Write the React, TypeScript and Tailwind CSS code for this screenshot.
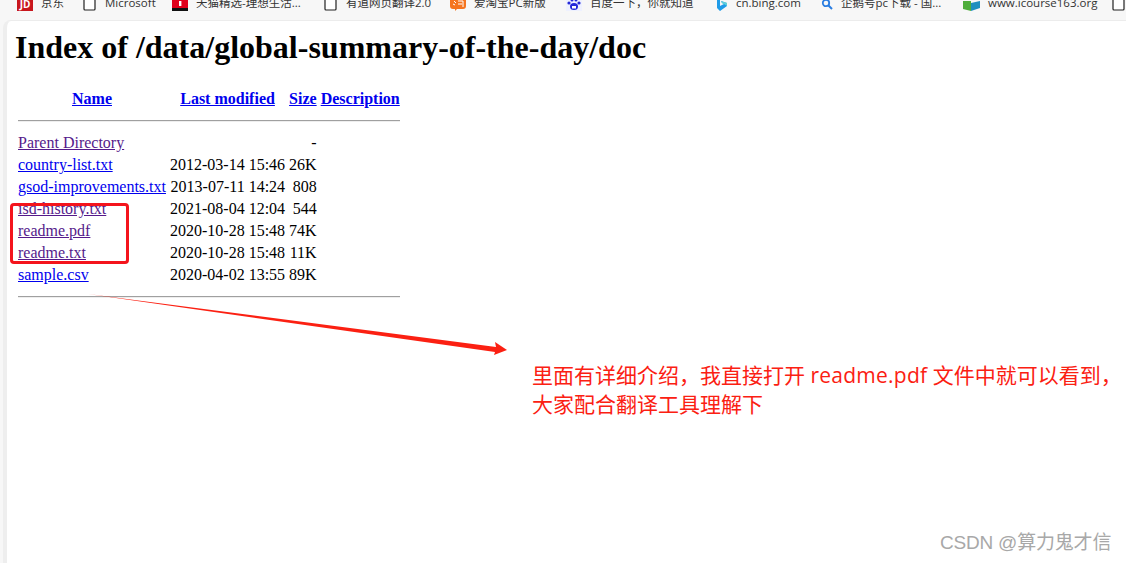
import React from 'react';

const rows = [
  { name: 'country-list.txt', date: '2012-03-14 15:46', size: '26K' },
  { name: 'gsod-improvements.txt', date: '2013-07-11 14:24', size: '808' },
  { name: 'isd-history.txt', date: '2021-08-04 12:04', size: '544', visited: true },
  { name: 'readme.pdf', date: '2020-10-28 15:48', size: '74K', visited: true },
  { name: 'readme.txt', date: '2020-10-28 15:48', size: '11K', visited: true },
  { name: 'sample.csv', date: '2020-04-02 13:55', size: '89K' },
];

const PageIcon = () => (
  <svg width="14" height="14" viewBox="0 0 14 14" className="shrink-0">
    <path d="M1 0V12Q1 13 2 13H11Q12 13 12 12V3L9 0" fill="#fff" stroke="#222" strokeWidth="1.2" />
  </svg>
);

const bookmarks = [
  {
    label: '京东', w: 'w-[66px]',
    icon: <span className="w-4 h-[11px] bg-[#c8161d] text-white text-[10px] leading-[8px] font-bold text-center shrink-0">JD</span>,
  },
  { label: 'Microsoft', w: 'w-[89px]', icon: <PageIcon /> },
  {
    label: '天猫精选-理想生活...', w: 'w-[152px]',
    icon: (
      <svg width="16" height="11" viewBox="0 0 16 11" className="shrink-0">
        <rect width="16" height="11" fill="#e0001b" />
        <rect y="8" width="16" height="3" fill="#111" />
        <rect x="7" y="1" width="2.4" height="5" fill="#fff" />
      </svg>
    ),
  },
  { label: '有道网页翻译2.0', w: 'w-[126px]', icon: <PageIcon /> },
  {
    label: '爱淘宝PC新版', w: 'w-[116px]',
    icon: (
      <svg width="16" height="12" viewBox="0 0 16 12" className="shrink-0">
        <path d="M0 0H16V7C16 9 15 10 13 10H7L5 12V10H3C1 10 0 9 0 7Z" fill="#f5741f" />
        <path d="M4 2L6 4M3 5L5 6M8 2H13V8M8 5H12" stroke="#fff" strokeWidth="1" fill="none" />
      </svg>
    ),
  },
  {
    label: '百度一下，你就知道', w: 'w-[150px]',
    icon: (
      <svg width="16" height="13" viewBox="0 0 16 13" className="shrink-0">
        <rect width="16" height="13" fill="#eef1ff" />
        <ellipse cx="8" cy="8.5" rx="4" ry="3.5" fill="#2529d8" />
        <circle cx="3" cy="5" r="1.6" fill="#2529d8" />
        <circle cx="13" cy="5" r="1.6" fill="#2529d8" />
        <circle cx="6" cy="2" r="1.5" fill="#2529d8" />
        <circle cx="10" cy="2" r="1.5" fill="#2529d8" />
        <rect x="6" y="8" width="4" height="2.5" fill="#fff" />
      </svg>
    ),
  },
  {
    label: 'cn.bing.com', w: 'w-[105px]',
    icon: (
      <svg width="12" height="13" viewBox="0 0 12 13" className="shrink-0">
        <path d="M1 0L4 1V8L8 6L6 5L5 3L11 5V8L4 13L1 10Z" fill="#1f9be8" />
        <path d="M8 6L6 5L5 3L11 5V8Z" fill="#5fd0d8" />
      </svg>
    ),
  },
  {
    label: '企鹅号pc下载 - 国...', w: 'w-[142px]',
    icon: (
      <svg width="12" height="12" viewBox="0 0 12 12" className="shrink-0">
        <circle cx="5" cy="4" r="3.2" fill="none" stroke="#2a7de1" strokeWidth="1.8" />
        <path d="M7.5 6.5L11 10" stroke="#2a7de1" strokeWidth="2" />
      </svg>
    ),
  },
  {
    label: 'www.icourse163.org', w: 'w-[149px]',
    icon: (
      <svg width="17" height="10" viewBox="0 0 17 10" className="shrink-0">
        <path d="M0 0H8V10L0 8Z" fill="#4fae3c" />
        <path d="M8 2L17 0V7L8 10Z" fill="#1f8fbf" />
      </svg>
    ),
  },
  { label: '', w: 'w-[14px]', icon: <PageIcon /> },
];

const App: React.FC = () => {
  return (
    <div className="relative w-[1126px] h-[563px] overflow-hidden bg-[#f7f7f7] flex flex-col">
      {/* Bookmarks bar, cut off at the top */}
      <div className="h-5 shrink-0 flex items-end pl-[17px] pb-[9px] overflow-hidden font-['Open_Sans','Noto_Sans_CJK_SC',sans-serif] text-[11.5px] leading-[16px] text-[#333]">
        {bookmarks.map((b, i) => (
          <div key={i} className={`${b.w} shrink-0 flex items-end gap-2 whitespace-nowrap`}>
            {b.icon}
            {b.label && <span>{b.label}</span>}
          </div>
        ))}
      </div>

      {/* Page */}
      <div className="flex-1 ml-[3px] bg-white rounded-tl-lg border-t border-[#ececec] border-l-[4px] border-l-[#eeeeee] pl-[8px] text-black font-['Liberation_Serif',serif]">
        <h1 className="text-[32px] leading-[37px] font-bold mt-[8px] mb-[21px]">
          Index of /data/global-summary-of-the-day/doc
        </h1>
        <table className="border-separate border-spacing-[2px] text-[16px] leading-[18px]">
          <tbody>
            <tr>
              <th className="p-px text-center font-bold"><a className="underline text-[#0000ee]">Name</a></th>
              <th className="p-px text-center font-bold"><a className="underline text-[#0000ee]">Last modified</a></th>
              <th className="p-px text-center font-bold"><a className="underline text-[#0000ee]">Size</a></th>
              <th className="p-px text-center font-bold"><a className="underline text-[#0000ee]">Description</a></th>
            </tr>
            <tr>
              <th colSpan={4} className="p-px font-normal"><hr className="mt-2 mb-2 border-t border-b border-[#a0a0a0] border-b-[#eeeeee]" /></th>
            </tr>
            <tr>
              <td className="p-px"><a className="underline text-[#551a8b]">Parent Directory</a></td>
              <td className="p-px"></td>
              <td className="p-px text-right">-</td>
              <td className="p-px"></td>
            </tr>
            {rows.map((r) => (
              <tr key={r.name}>
                <td className="p-px">
                  <a className={r.visited ? 'underline text-[#551a8b]' : 'underline text-[#0000ee]'}>{r.name}</a>
                </td>
                <td className="p-px text-right">{r.date}</td>
                <td className="p-px text-right">{r.size}</td>
                <td className="p-px"></td>
              </tr>
            ))}
            <tr>
              <th colSpan={4} className="p-px font-normal"><hr className="mt-2 mb-2 border-t border-b border-[#a0a0a0] border-b-[#eeeeee]" /></th>
            </tr>
          </tbody>
        </table>
      </div>

      {/* Annotations pasted over the screenshot */}
      <div className="absolute left-[10px] top-[203px] w-[119px] h-[61px] border-[3px] border-[#f4141c] rounded-[4px]" />
      <svg className="absolute left-0 top-0 pointer-events-none" width="1126" height="563" viewBox="0 0 1126 563">
        <path d="M88 294 L496 347 L495 342 L507 350 L494 355 L495 352 Z" fill="#fb2012" />
      </svg>
      <div className="absolute left-[532px] top-[361px] w-[590px] text-[21px] leading-[29px] text-[#fb2012] font-['Open_Sans','Noto_Sans_CJK_SC',sans-serif]">
        <div className="whitespace-nowrap">里面有详细介绍，我直接打开 <span className="tracking-[0.25px]">readme.pdf</span> 文件中就可以看到，</div>
        <div className="whitespace-nowrap">大家配合翻译工具理解下</div>
      </div>
      <div className="absolute left-[940px] top-[530px] text-[19px] leading-[26px] tracking-[-0.2px] text-[#a8a8a8] whitespace-nowrap font-['Liberation_Sans','Noto_Sans_CJK_SC',sans-serif]">
        CSDN @算力鬼才信
      </div>
    </div>
  );
};

export default App;
